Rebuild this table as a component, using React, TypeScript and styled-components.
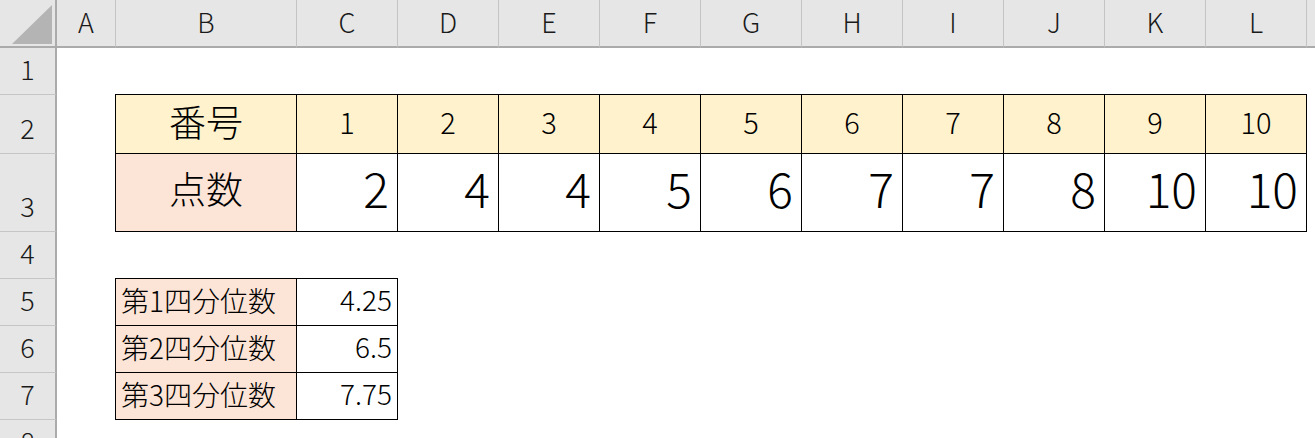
import React from "react";
import styled, { createGlobalStyle } from "styled-components";

const Global = createGlobalStyle`
  html, body { margin: 0; padding: 0; background: #ffffff; }
  body { font-family: "Noto Sans CJK JP", "Noto Sans", sans-serif; font-weight: 300; color: #000; }
`;

const Sheet = styled.div`
  display: grid;
  grid-template-columns: 57px 59px 181px repeat(10, 101px) 1fr;
  grid-template-rows: 48px 47px 59px 78px 47px 47px 47px 47px 47px;
  width: 1315px;
  height: 438px;
  overflow: hidden;
  background: #ffffff;
`;

const Corner = styled.div`
  background: #e6e6e6;
  border-right: 2px solid #ababab;
  border-bottom: 2px solid #ababab;
  display: flex;
  align-items: flex-end;
  justify-content: flex-end;
  padding: 0 3px 2px 0;
  svg { display: block; }
`;

const ColHead = styled.div<{ $last?: boolean }>`
  background: #e6e6e6;
  border-bottom: 2px solid #ababab;
  border-right: ${(p) => (p.$last ? "none" : "1px solid #c4c4c4")};
  display: flex;
  align-items: center;
  justify-content: center;
  font-size: 27px;
  color: #1a1a1a;
  line-height: 1;
  padding-bottom: 4px;
`;

const RowHead = styled.div`
  background: #e6e6e6;
  border-right: 2px solid #ababab;
  border-bottom: 1px solid #c6c6c6;
  display: flex;
  align-items: flex-end;
  justify-content: center;
`;

const RowLabel = styled.span`
  display: flex;
  align-items: center;
  justify-content: center;
  height: 46px;
  padding-bottom: 5px;
  box-sizing: border-box;
  font-size: 27px;
  line-height: 1;
  color: #1a1a1a;
`;

const Cell = styled.div<{
  $bg?: string;
  $boxed?: boolean;
  $align?: "left" | "center" | "right";
  $size?: number;
  $pad?: number;
  $shift?: number;
}>`
  display: flex;
  align-items: center;
  justify-content: ${(p) =>
    p.$align === "left" ? "flex-start" : p.$align === "right" ? "flex-end" : "center"};
  background: ${(p) => p.$bg || "transparent"};
  border: ${(p) => (p.$boxed ? "1px solid #000" : "none")};
  margin: ${(p) => (p.$boxed ? "-1px 0 0 -1px" : "0")};
  padding: 0 ${(p) => (p.$align === "right" ? p.$pad ?? 6 : 0)}px ${(p) => p.$shift ?? 0}px
    ${(p) => (p.$align === "left" ? p.$pad ?? 5 : 0)}px;
  font-size: ${(p) => p.$size ?? 28}px;
  line-height: 1;
  white-space: nowrap;
  overflow: visible;
`;

const Triangle = () => (
  <svg width="40" height="39" viewBox="0 0 40 39">
    <polygon points="40,0 40,39 0,39" fill="#b4b4b4" />
  </svg>
);

type CellData = {
  text?: string;
  bg?: string;
  boxed?: boolean;
  align?: "left" | "center" | "right";
  size?: number;
  pad?: number;
  shift?: number;
};

const YELLOW = "#fff2cc";
const PEACH = "#fce4d6";

const letters = ["A", "B", "C", "D", "E", "F", "G", "H", "I", "J", "K", "L", ""];
const scores = [2, 4, 4, 5, 6, 7, 7, 8, 10, 10];
const quartiles: [string, string][] = [
  ["第1四分位数", "4.25"],
  ["第2四分位数", "6.5"],
  ["第3四分位数", "7.75"],
];

const empty = (n: number): CellData[] => Array.from({ length: n }, () => ({}));

const rows: CellData[][] = [
  empty(13),
  [
    {},
    { text: "番号", bg: YELLOW, boxed: true, align: "center", size: 37, shift: 5 },
    ...scores.map((_, i) => ({
      text: String(i + 1),
      bg: YELLOW,
      boxed: true,
      align: "center" as const,
      size: 29,
      shift: 6,
    })),
    {},
  ],
  [
    {},
    { text: "点数", bg: PEACH, boxed: true, align: "center", size: 37, shift: 8 },
    ...scores.map((s) => ({
      text: String(s),
      bg: "#ffffff",
      boxed: true,
      align: "right" as const,
      size: 48,
      pad: 8,
      shift: 11,
    })),
    {},
  ],
  empty(13),
  ...quartiles.map(([label, value]) => [
    {},
    { text: label, bg: PEACH, boxed: true, align: "left" as const, size: 28, pad: 5, shift: 5 },
    { text: value, bg: "#ffffff", boxed: true, align: "right" as const, size: 28, pad: 5, shift: 6 },
    ...empty(10),
  ]),
  empty(13),
];

export default function App() {
  return (
    <>
      <Global />
      <Sheet>
        <Corner>
          <Triangle />
        </Corner>
        {letters.map((l, i) => (
          <ColHead key={`h${i}`} $last={i === letters.length - 1}>
            {l}
          </ColHead>
        ))}
        {rows.map((row, r) => (
          <React.Fragment key={`r${r}`}>
            <RowHead>
              <RowLabel>{r + 1}</RowLabel>
            </RowHead>
            {row.map((c, ci) => (
              <Cell
                key={`c${r}-${ci}`}
                $bg={c.bg}
                $boxed={c.boxed}
                $align={c.align}
                $size={c.size}
                $pad={c.pad}
                $shift={c.shift}
              >
                {c.text}
              </Cell>
            ))}
          </React.Fragment>
        ))}
      </Sheet>
    </>
  );
}
